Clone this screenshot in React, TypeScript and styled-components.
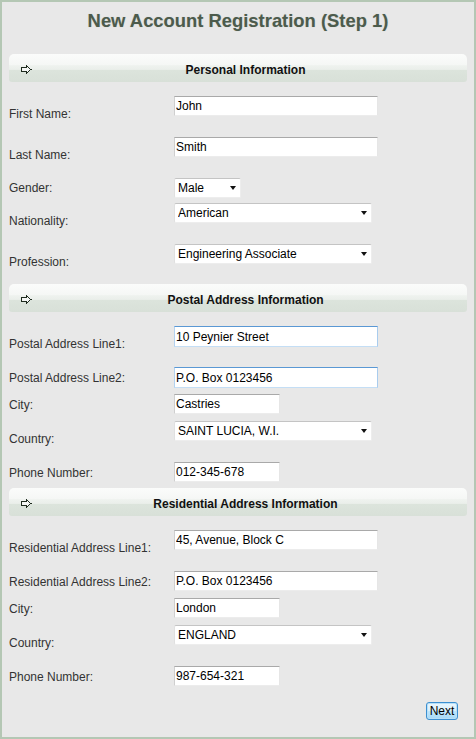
import React from "react";
import styled, { createGlobalStyle } from "styled-components";

const GlobalStyle = createGlobalStyle`
  html, body { margin: 0; padding: 0; background: #e8e8e8; }
  body { font-family: "Liberation Sans", Arial, sans-serif; }
  * { box-sizing: border-box; }
`;

const Page = styled.div`
  min-height: 100vh;
  border: 2px solid #b4c7b4;
  background: #e8e8e8;
  padding: 8px 7px 0 7px;
`;

const Title = styled.h1`
  margin: 0 0 22px;
  font-size: 18.4px;
  line-height: 22px;
  font-weight: bold;
  text-align: center;
  color: #4c5b4c;
  text-shadow: 0 0 1px rgba(76, 91, 76, 0.25);
`;

const Bar = styled.div<{ $first?: boolean }>`
  display: flex;
  align-items: center;
  height: 28px;
  margin: ${(p) => (p.$first ? "0" : "2px")} 0 11px;
  padding: 3px 8px 0 12px;
  border-radius: 5px 5px 3px 3px;
  background: linear-gradient(
    to bottom,
    #fbfcfb 0%,
    #f5f7f5 38%,
    #eef2ee 42%,
    #ebefeb 55%,
    #dce4dc 58%,
    #d8e0d8 100%
  );
`;

const BarTitle = styled.span`
  flex: 1;
  text-align: center;
  font-size: 12px;
  line-height: 14px;
  font-weight: bold;
  color: #111;
`;

const Row = styled.div<{ $h: number }>`
  display: grid;
  grid-template-columns: 165px 1fr;
  height: ${(p) => p.$h}px;
`;

const Label = styled.label`
  align-self: center;
  font-size: 12px;
  line-height: 14px;
  color: #333;
`;

const Field = styled.div`
  align-self: start;
  padding-top: 3px;
`;

const TextInput = styled.input<{ $w: number; $active?: boolean }>`
  display: block;
  width: ${(p) => p.$w}px;
  height: ${(p) => (p.$active ? 21 : 20)}px;
  margin: 0;
  padding: 0 1px;
  font-family: "Liberation Sans", Arial, sans-serif;
  font-size: 12px;
  color: #000;
  background: #fff;
  border: 1px solid;
  border-color: ${(p) =>
    p.$active
      ? "#5a98d4 #a9ccee #c4def5 #b3d2ef"
      : "#a9a9a9 #e6e6e6 #ececec #cfcfcf"};
  outline: none;
`;

const SelectWrap = styled.div<{ $w: number }>`
  position: relative;
  width: ${(p) => p.$w}px;
  &::after {
    content: "";
    position: absolute;
    right: 5px;
    top: 8px;
    border-left: 3.5px solid transparent;
    border-right: 3.5px solid transparent;
    border-top: 4px solid #111;
    pointer-events: none;
  }
`;

const Select = styled.select`
  display: block;
  width: 100%;
  height: 20px;
  margin: 0;
  padding: 0 14px 0 3px;
  font-family: "Liberation Sans", Arial, sans-serif;
  font-size: 12px;
  color: #000;
  background: #fff;
  border: 1px solid;
  border-color: #c4c4c4 #ededed #ededed #e0e0e0;
  border-radius: 2px;
  appearance: none;
  -webkit-appearance: none;
  outline: none;
`;

const Actions = styled.div`
  display: flex;
  justify-content: flex-end;
  padding: 12px 9px 0 0;
`;

const NextButton = styled.button`
  width: 32px;
  height: 18px;
  padding: 0;
  font-family: "Liberation Sans", Arial, sans-serif;
  font-size: 12px;
  line-height: 14px;
  color: #000;
  border: 1px solid #3c8fd0;
  border-radius: 3px;
  background: linear-gradient(to bottom, #eaf6fd 0%, #d9f0fc 50%, #bee6fd 51%, #a7d9f5 100%);
  box-shadow: inset 0 0 0 1px #b8e0f8;
`;

const Arrow = () => (
  <svg width="11" height="9" viewBox="0 0 11 9" aria-hidden="true">
    <path
      d="M0.5 2.5 H5.5 V0.5 L9.8 4.5 L5.5 8.5 V6.5 H0.5 Z"
      fill="#f4f6f4"
      stroke="#1e2b1e"
      strokeWidth="1"
      shapeRendering="crispEdges"
    />
  </svg>
);

type Item =
  | { kind: "input"; label: string; value: string; w: number; h: number; active?: boolean }
  | { kind: "select"; label: string; value: string; w: number; h: number };

const personal: Item[] = [
  { kind: "input", label: "First Name:", value: "John", w: 204, h: 41 },
  { kind: "input", label: "Last Name:", value: "Smith", w: 204, h: 41 },
  { kind: "select", label: "Gender:", value: "Male", w: 67, h: 25 },
  { kind: "select", label: "Nationality:", value: "American", w: 198, h: 41 },
  { kind: "select", label: "Profession:", value: "Engineering Associate", w: 198, h: 41 },
];

const postal: Item[] = [
  { kind: "input", label: "Postal Address Line1:", value: "10 Peynier Street", w: 204, h: 41, active: true },
  { kind: "input", label: "Postal Address Line2:", value: "P.O. Box 0123456", w: 204, h: 27, active: true },
  { kind: "input", label: "City:", value: "Castries", w: 106, h: 27 },
  { kind: "select", label: "Country:", value: "SAINT LUCIA, W.I.", w: 198, h: 41 },
  { kind: "input", label: "Phone Number:", value: "012-345-678", w: 106, h: 27 },
];

const residential: Item[] = [
  { kind: "input", label: "Residential Address Line1:", value: "45, Avenue, Block C", w: 204, h: 41 },
  { kind: "input", label: "Residential Address Line2:", value: "P.O. Box 0123456", w: 204, h: 27 },
  { kind: "input", label: "City:", value: "London", w: 106, h: 27 },
  { kind: "select", label: "Country:", value: "ENGLAND", w: 198, h: 41 },
  { kind: "input", label: "Phone Number:", value: "987-654-321", w: 106, h: 27 },
];

const FormRow = ({ item }: { item: Item }) => (
  <Row $h={item.h}>
    <Label>{item.label}</Label>
    <Field>
      {item.kind === "input" ? (
        <TextInput $w={item.w} $active={item.active} defaultValue={item.value} />
      ) : (
        <SelectWrap $w={item.w}>
          <Select defaultValue={item.value}>
            <option value={item.value}>{item.value}</option>
          </Select>
        </SelectWrap>
      )}
    </Field>
  </Row>
);

const Section = ({ title, items, first }: { title: string; items: Item[]; first?: boolean }) => (
  <>
    <Bar $first={first}>
      <Arrow />
      <BarTitle>{title}</BarTitle>
    </Bar>
    {items.map((it, i) => (
      <FormRow key={i} item={it} />
    ))}
  </>
);

export default function App() {
  return (
    <>
      <GlobalStyle />
      <Page>
        <Title>New Account Registration (Step 1)</Title>
        <Section title="Personal Information" items={personal} first />
        <Section title="Postal Address Information" items={postal} />
        <Section title="Residential Address Information" items={residential} />
        <Actions>
          <NextButton type="button">Next</NextButton>
        </Actions>
      </Page>
    </>
  );
}
